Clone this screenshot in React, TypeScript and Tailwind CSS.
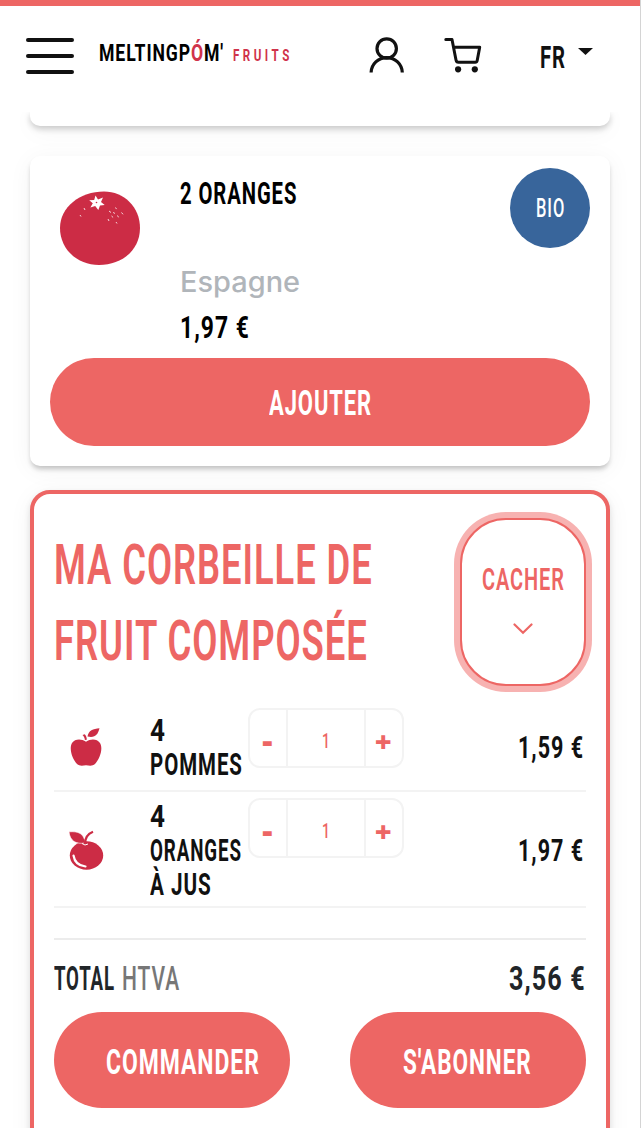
import { useLayoutEffect, useRef, useState, type ReactNode } from "react";

interface FitTextProps {
  width: number;
  className?: string;
  children: ReactNode;
}

// Condenses a line of text horizontally so that it fills the given width.
function FitText({ width, className = "", children }: FitTextProps) {
  const ref = useRef<HTMLSpanElement>(null);
  const [scale, setScale] = useState(1);

  useLayoutEffect(() => {
    if (ref.current) setScale(width / ref.current.offsetWidth);
  }, [width]);

  return (
    <span className={`block shrink-0 ${className}`} style={{ width }}>
      <span
        ref={ref}
        className="inline-block origin-left align-top whitespace-pre"
        style={{ transform: `scaleX(${scale})` }}
      >
        {children}
      </span>
    </span>
  );
}

function UserIcon() {
  return (
    <svg width="36" height="37" viewBox="0 0 36 37" fill="none" stroke="#111" strokeWidth="3.2">
      <circle cx="17.7" cy="11.5" r="9.7" />
      <path d="M2.1 35.5C2.4 27 9.2 20.6 17.7 20.6S33 27 33.3 35.5" />
    </svg>
  );
}

function CartIcon() {
  return (
    <svg
      width="38"
      height="37"
      viewBox="0 0 38 37"
      fill="none"
      stroke="#111"
      strokeWidth="3"
      strokeLinecap="round"
      strokeLinejoin="round"
    >
      <path d="M1.8 2.5H8L12 23C12.3 24.6 13 25.3 14.5 25.3H31.2C32.3 25.3 33 24.6 33.2 23.5L35.7 10.2H9.5" />
      <circle cx="14.1" cy="32.3" r="3.1" fill="#111" stroke="none" />
      <circle cx="30.8" cy="32.3" r="3.1" fill="#111" stroke="none" />
    </svg>
  );
}

function OrangeFruit() {
  return (
    <svg width="80" height="75" viewBox="0 0 80 75">
      <path
        d="M44 .5C64 .5 80 16 80 37C80 59 62 74 39 74C17 74 0 58 0 37C0 16 20 .5 44 .5Z"
        fill="#cc2c45"
      />
      <path
        d="M35.5 4.5L38 8.4L43 6.4L41 11L44.7 14L40 14.4L38.3 19L35.2 15L30.4 16.6L32.8 12.2L29.2 9.3L34.2 9.1Z"
        fill="white"
      />
      <path
        d="M24 17l1 2M20 24l1 1.5M49 20l2 1.5M55.5 16.5l1 1.6M53.5 21l1 1.8M61.5 21.5l1.5 1.8M51.5 25l1.6 1.4M57.5 24.5l1 1.8M48 28l1 2M56 31l1 1.5"
        stroke="white"
        strokeWidth=".8"
      />
      <circle cx="36.5" cy="11.5" r=".8" fill="#cc2c45" />
    </svg>
  );
}

function AppleIcon() {
  return (
    <svg width="36" height="40" viewBox="0 0 36 40" fill="#cc2c45">
      <path d="M18 14.7C23 11.6 29 11.8 32 16C35.5 22 31.5 32 27 37C24.5 39.3 21.5 38.8 18 38.2C14.5 38.8 11.5 39.3 9 37C4.5 32 .7 22 4 16C7 11.8 13 11.6 18 14.7Z" />
      <path d="M19.5 9.5C20.5 3.5 25 1.8 31.5 1.3C30 7.5 27 11.3 19.5 9.5Z" />
      <path d="M14.5 8L16.8 7.3C18.2 9 18.7 10.5 18.8 12.7L16.9 13.1C16.7 11 15.9 9.4 14.5 8Z" />
    </svg>
  );
}

function JuiceOrangeIcon() {
  return (
    <svg width="37" height="41" viewBox="0 0 37 41" fill="none">
      <ellipse cx="18.5" cy="25.5" rx="16.7" ry="14.2" fill="#cc2c45" />
      <path d="M1 1.8C10 1.2 16 3 17.2 13C8 14.5 2 11 1 1.8Z" fill="#cc2c45" stroke="white" strokeWidth=".6" />
      <path d="M17 14C17 7.5 20 3.8 25 1.8" stroke="#cc2c45" strokeWidth="2.3" />
      <path d="M14 13.5L17 15L20 14" stroke="white" strokeWidth="1" />
      <path d="M5.5 25.5C6.5 32 11 35.8 17.5 36.5" stroke="white" strokeWidth="2.2" strokeLinecap="round" />
    </svg>
  );
}

function Stepper({ value }: { value: number }) {
  return (
    <div className="flex h-[60px] w-[156px] rounded-xl border-2 border-[#f3f3f3] text-[#ed6664]">
      <button type="button" className="flex w-9 items-center justify-center pt-1 font-['Open_Sans'] text-[32px] leading-none font-extrabold">
        -
      </button>
      <div className="flex flex-1 justify-center border-x-2 border-[#f3f3f3] pt-[21px]">
        <FitText width={9} className="text-[20px] leading-5 font-medium">
          {value}
        </FitText>
      </div>
      <button type="button" className="flex w-9 items-center justify-center pt-1 font-['Open_Sans'] text-[29px] leading-none font-extrabold">
        +
      </button>
    </div>
  );
}

interface BasketRowProps {
  icon: ReactNode;
  lines: { text: string; width: number }[];
  price: string;
  className: string;
}

function BasketRow({ icon, lines, price, className }: BasketRowProps) {
  return (
    <div className={`flex border-b-2 border-[#f3f3f3] ${className}`}>
      <div className="flex w-16 items-center justify-center pb-1">{icon}</div>
      <div className="ml-8 w-[98px] self-center pb-[3px] text-[31px] leading-[34px] font-bold text-[#111]">
        {lines.map((line) => (
          <FitText key={line.text} width={line.width}>
            {line.text}
          </FitText>
        ))}
      </div>
      <Stepper value={1} />
      <FitText width={66} className="mr-[2px] ml-auto self-center pb-[3px] text-[31px] leading-8 font-bold text-[#111]">
        {price}
      </FitText>
    </div>
  );
}

export default function App() {
  return (
    <div className="flex h-[1128px] w-[642px] overflow-hidden bg-white font-[Roboto,'Liberation_Sans',sans-serif] tracking-[0.09em]">
      <div className="w-[640px] bg-white">
        <header className="relative z-10 flex h-28 items-start border-t-[6px] border-[#ed6664] bg-white">
          <button type="button" aria-label="Menu" className="mt-8 ml-[26px] flex w-12 flex-col gap-3">
            <span className="h-1 rounded-full bg-[#111]" />
            <span className="h-1 rounded-full bg-[#111]" />
            <span className="h-1 rounded-full bg-[#111]" />
          </button>
          <div className="mt-9 ml-[25px] flex w-[192px] items-baseline">
            <FitText width={125} className="text-[23px] leading-6 font-bold tracking-[0.05em] text-black">
              MELTINGP<span className="text-[#d0334b]">Ó</span>M'
            </FitText>
            <FitText width={60} className="ml-[9px] text-[17px] leading-6 font-bold tracking-[0.3em] text-[#d0334b]">
              FRUITS
            </FitText>
          </div>
          <div className="mt-[31px] ml-[78px]">
            <UserIcon />
          </div>
          <div className="mt-[31px] ml-[39px]">
            <CartIcon />
          </div>
          <div className="mt-[35px] ml-[58px] flex">
            <FitText width={26} className="text-[32px] leading-8 font-bold text-[#111]">
              FR
            </FitText>
            <svg width="15" height="7" viewBox="0 0 15 7" className="mt-[7px] ml-3" fill="#111">
              <path d="M0 0H15L7.5 7Z" />
            </svg>
          </div>
        </header>

        <div className="mx-[30px] h-[14px] rounded-b-[10px] bg-white shadow-[0_3px_6px_rgba(0,0,0,0.2),0_4px_24px_rgba(0,0,0,0.05)]" />

        <section className="mx-[30px] mt-[30px] h-[310px] rounded-[10px] bg-white px-5 pt-3 shadow-[0_4px_5px_-1px_rgba(0,0,0,0.22),0_4px_24px_rgba(0,0,0,0.05)]">
          <div className="flex h-[190px]">
            <div className="mt-[23px] ml-[10px] w-[120px]">
              <OrangeFruit />
            </div>
            <div className="mt-[9px] flex-1 text-[32px] leading-8 font-bold text-black">
              <FitText width={117}>2 ORANGES</FitText>
              <FitText
                width={120}
                className="mt-[57px] font-[Inter,sans-serif] text-[28px] leading-8 font-medium tracking-normal text-[#b0b5ba]"
              >
                Espagne
              </FitText>
              <FitText width={70} className="mt-[13px]">
                1,97 €
              </FitText>
            </div>
            <div className="flex size-20 items-center justify-center rounded-full bg-[#38659b] pt-0.5 text-white">
              <FitText width={29} className="text-[25px] leading-7 font-medium">
                BIO
              </FitText>
            </div>
          </div>
          <button type="button" className="flex h-[88px] w-full items-center justify-center rounded-full bg-[#ed6664] pt-[4px] text-white">
            <FitText width={103} className="text-[35px] leading-9 font-bold">
              AJOUTER
            </FitText>
          </button>
        </section>

        <section className="mx-[30px] mt-6 h-[700px] rounded-[20px] border-4 border-[#ed6664] bg-white px-5 shadow-[0_3px_6px_rgba(0,0,0,0.12),0_4px_24px_rgba(0,0,0,0.05)]">
          <div className="flex h-[212px] justify-between pt-6">
            <h2 className="pt-[9px] text-[56px] leading-[76px] font-semibold text-[#ed6664]">
              <FitText width={319}>MA CORBEILLE DE</FitText>
              <FitText width={314}>FRUIT COMPOSÉE</FitText>
            </h2>
            <button
              type="button"
              className="flex h-[168px] w-[126px] flex-col items-center rounded-[46px] border-2 border-[#ed6664] bg-white pt-[43px] text-[#ed6664] ring-[6px] ring-[#f7b2b1]"
            >
              <FitText width={83} className="text-left text-[32px] leading-8 font-semibold">
                CACHER
              </FitText>
              <svg width="20" height="12" viewBox="0 0 20 12" className="mt-[28px]" fill="none" stroke="#ed6664" strokeWidth="2.2" strokeLinecap="round">
                <path d="M1.5 1.5L10 9.8L18.5 1.5" />
              </svg>
            </button>
          </div>

          <BasketRow
            className="h-[86px] pt-0.5"
            icon={<AppleIcon />}
            lines={[
              { text: "4", width: 16 },
              { text: "POMMES", width: 93 },
            ]}
            price="1,59 €"
          />
          <BasketRow
            className="h-[116px] pt-1.5"
            icon={<JuiceOrangeIcon />}
            lines={[
              { text: "4", width: 16 },
              { text: "ORANGES", width: 92 },
              { text: "À JUS", width: 62 },
            ]}
            price="1,97 €"
          />

          <div className="mt-[30px] flex h-[74px] border-t-2 border-[#ececec] pt-[23px] text-[33px] leading-8 font-bold text-[#212529]">
            <FitText width={61}>TOTAL</FitText>
            <FitText width={58} className="ml-[7px] font-medium text-[#777]">
              HTVA
            </FitText>
            <FitText width={77} className="ml-auto">
              3,56 €
            </FitText>
          </div>
          <div className="flex justify-between text-[35px] leading-9 font-bold text-white">
            <button type="button" className="h-24 w-[236px] rounded-full bg-[#ed6664] pt-1.5 pl-[52px] text-left">
              <FitText width={154}>COMMANDER</FitText>
            </button>
            <button type="button" className="h-24 w-[236px] rounded-full bg-[#ed6664] pt-1.5 pl-[53px] text-left">
              <FitText width={129}>S'ABONNER</FitText>
            </button>
          </div>
        </section>
      </div>
      <div className="w-0.5 border-l border-[#d4d4d4] bg-white" />
    </div>
  );
}
